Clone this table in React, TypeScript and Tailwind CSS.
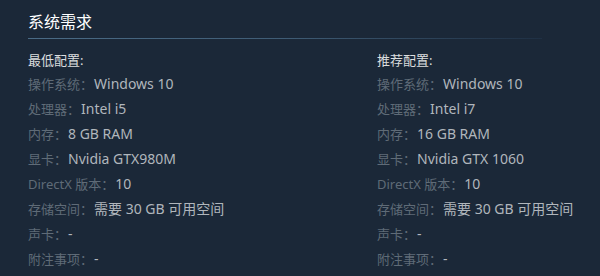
const minimum: [string, string][] = [
  ["操作系统", "Windows 10"],
  ["处理器", "Intel i5"],
  ["内存", "8 GB RAM"],
  ["显卡", "Nvidia GTX980M"],
  ["DirectX 版本", "10"],
  ["存储空间", "需要 30 GB 可用空间"],
  ["声卡", "-"],
  ["附注事项", "-"],
];

const recommended: [string, string][] = [
  ["操作系统", "Windows 10"],
  ["处理器", "Intel i7"],
  ["内存", "16 GB RAM"],
  ["显卡", "Nvidia GTX 1060"],
  ["DirectX 版本", "10"],
  ["存储空间", "需要 30 GB 可用空间"],
  ["声卡", "-"],
  ["附注事项", "-"],
];

function ReqColumn({ title, rows }: { title: string; rows: [string, string][] }) {
  return (
    <div>
      <div className="h-[22px] leading-[22px] text-[13px] text-[#dcdedf]">{title}</div>
      <ul>
        {rows.map(([label, value]) => (
          <li key={label} className="h-[25px] leading-[25px] whitespace-nowrap flex items-baseline">
            <span className="text-[13px] text-[#5f6b77]">{label}：</span>
            <span className="ml-[1px] text-[14px] text-[#b0b6bc]">{value}</span>
          </li>
        ))}
      </ul>
    </div>
  );
}

export default function App() {
  return (
    <div
      className="w-[600px] h-[276px] bg-[#1b2838] overflow-hidden pl-[28px]"
      style={{ fontFamily: '"Noto Sans", "Noto Sans CJK SC", sans-serif' }}
    >
      <div className="w-[514px]">
        <h2 className="pt-[9px] h-[38px] text-[16px] leading-[26px] text-white">系统需求</h2>
        <div className="h-px bg-gradient-to-r from-[#4a6b86] via-[#3f5c75] to-[#1f3044]" />
      </div>
      <div className="mt-[10px] grid grid-cols-[349px_1fr]">
        <ReqColumn title="最低配置:" rows={minimum} />
        <ReqColumn title="推荐配置:" rows={recommended} />
      </div>
    </div>
  );
}
